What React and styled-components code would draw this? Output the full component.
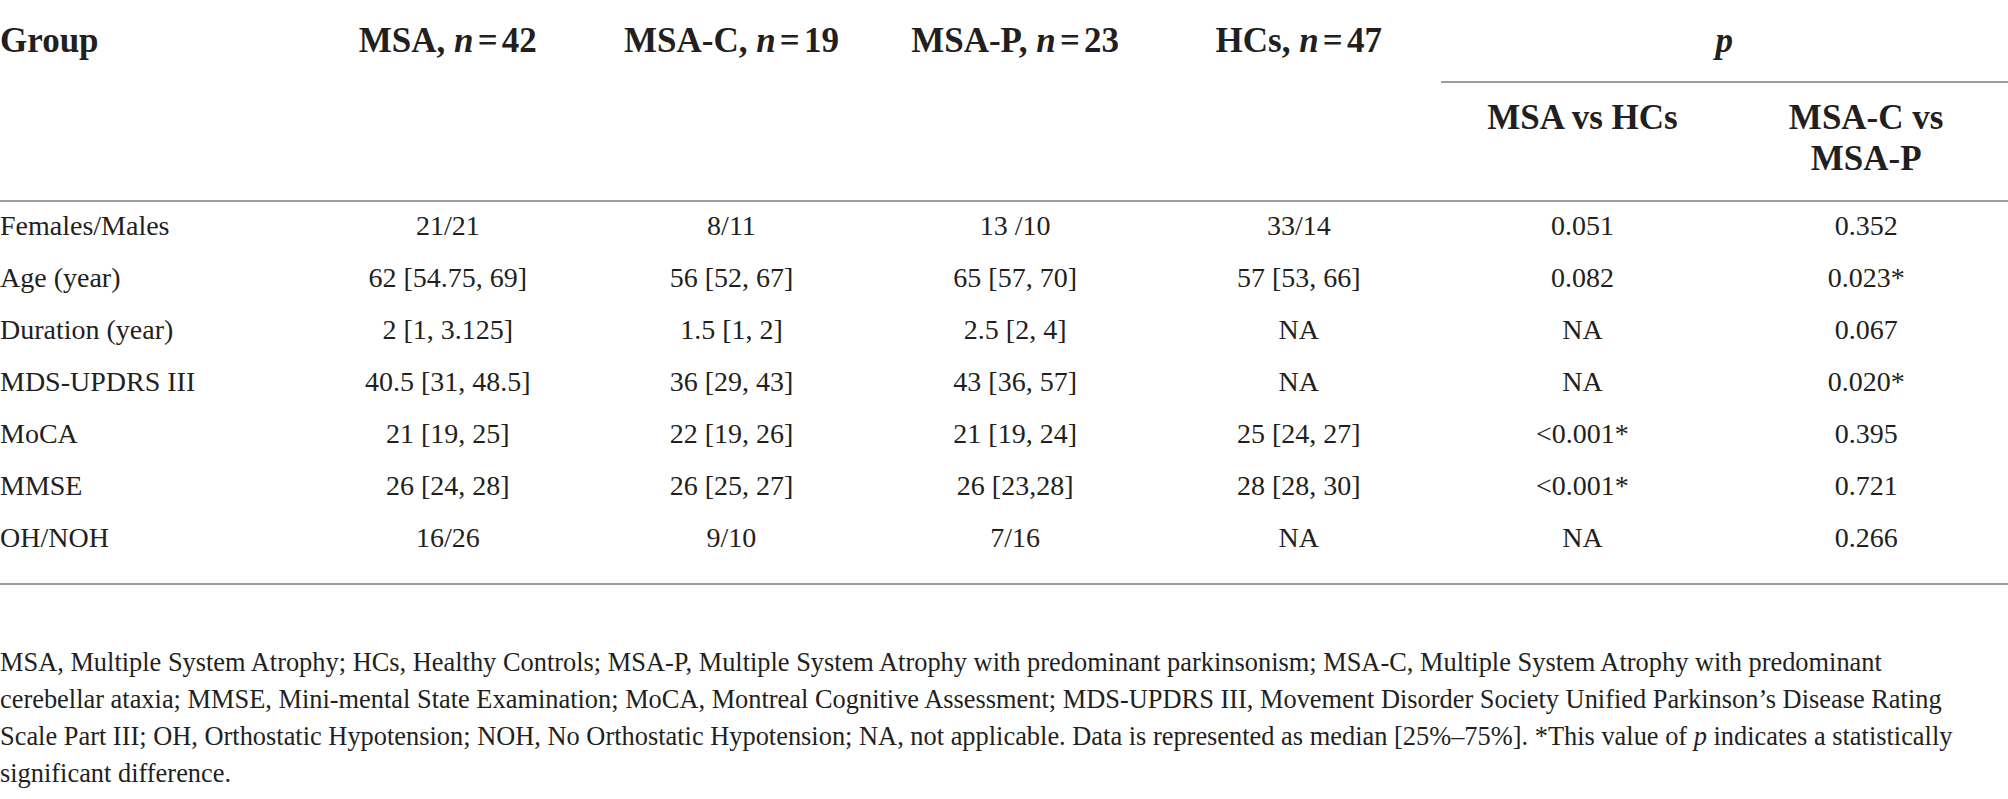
import React from "react";
import styled, { createGlobalStyle } from "styled-components";

const GlobalStyle = createGlobalStyle`
  html, body {
    margin: 0;
    padding: 0;
    background: #ffffff;
  }
  body {
    font-family: "Liberation Serif", "Times New Roman", serif;
    color: #231f20;
  }
`;

const RULE = "#9d9d9d";

const Page = styled.div`
  width: 2008px;
`;

const TableWrap = styled.div`
  padding-bottom: 17px;
  border-bottom: 2px solid ${RULE};
`;

const Table = styled.table`
  width: 100%;
  border-collapse: separate;
  border-spacing: 0;
  table-layout: fixed;
`;

const HeadCell = styled.th`
  font-size: 35px;
  font-weight: bold;
  line-height: 41px;
  vertical-align: top;
  white-space: nowrap;
  text-align: ${(p) => (p.$align === "left" ? "left" : "center")};
  padding: ${(p) => (p.$sub ? "14px 0 21px" : "20px 0 20px")};
  border-bottom: ${(p) => (p.$rule ? `2px solid ${RULE}` : "none")};
`;

const Var = styled.i`
  font-style: italic;
`;

const Eq = styled.span`
  padding: 0 0.12em;
`;

const BodyCell = styled.td`
  font-size: 28px;
  line-height: 32px;
  padding: 7.6px 0 12.4px;
  white-space: nowrap;
  text-align: ${(p) => (p.$align === "left" ? "left" : "center")};
`;

const Footnote = styled.div`
  padding-top: 59.5px;
  font-size: 26.4px;
  line-height: 37px;
`;

const FootLine = styled.div`
  white-space: nowrap;
`;

const groups = [
  ["MSA", "42"],
  ["MSA-C", "19"],
  ["MSA-P", "23"],
  ["HCs", "47"],
];

const rows = [
  ["Females/Males", "21/21", "8/11", "13 /10", "33/14", "0.051", "0.352"],
  ["Age (year)", "62 [54.75, 69]", "56 [52, 67]", "65 [57, 70]", "57 [53, 66]", "0.082", "0.023*"],
  ["Duration (year)", "2 [1, 3.125]", "1.5 [1, 2]", "2.5 [2, 4]", "NA", "NA", "0.067"],
  ["MDS-UPDRS III", "40.5 [31, 48.5]", "36 [29, 43]", "43 [36, 57]", "NA", "NA", "0.020*"],
  ["MoCA", "21 [19, 25]", "22 [19, 26]", "21 [19, 24]", "25 [24, 27]", "<0.001*", "0.395"],
  ["MMSE", "26 [24, 28]", "26 [25, 27]", "26 [23,28]", "28 [28, 30]", "<0.001*", "0.721"],
  ["OH/NOH", "16/26", "9/10", "7/16", "NA", "NA", "0.266"],
];

export default function App() {
  return (
    <Page>
      <GlobalStyle />
      <TableWrap>
        <Table>
          <colgroup>
            <col style={{ width: "306px" }} />
            <col />
            <col />
            <col />
            <col />
            <col />
            <col />
          </colgroup>
          <thead>
            <tr>
              <HeadCell rowSpan={2} $align="left" $rule>
                Group
              </HeadCell>
              {groups.map(([name, n]) => (
                <HeadCell key={name} rowSpan={2} $rule>
                  {name}, <Var>n</Var>
                  <Eq>=</Eq>
                  {n}
                </HeadCell>
              ))}
              <HeadCell colSpan={2} $rule>
                <Var>p</Var>
              </HeadCell>
            </tr>
            <tr>
              <HeadCell $sub $rule>
                MSA vs HCs
              </HeadCell>
              <HeadCell $sub $rule>
                MSA-C vs
                <br />
                MSA-P
              </HeadCell>
            </tr>
          </thead>
          <tbody>
            {rows.map((r) => (
              <tr key={r[0]}>
                {r.map((v, i) => (
                  <BodyCell key={i} $align={i === 0 ? "left" : "center"}>
                    {v}
                  </BodyCell>
                ))}
              </tr>
            ))}
          </tbody>
        </Table>
      </TableWrap>
      <Footnote>
        <FootLine>
          MSA, Multiple System Atrophy; HCs, Healthy Controls; MSA-P, Multiple System Atrophy with
          predominant parkinsonism; MSA-C, Multiple System Atrophy with predominant
        </FootLine>
        <FootLine>
          cerebellar ataxia; MMSE, Mini-mental State Examination; MoCA, Montreal Cognitive
          Assessment; MDS-UPDRS III, Movement Disorder Society Unified Parkinson’s Disease Rating
        </FootLine>
        <FootLine>
          Scale Part III; OH, Orthostatic Hypotension; NOH, No Orthostatic Hypotension; NA, not
          applicable. Data is represented as median [25%–75%]. *This value of <Var>p</Var> indicates
          a statistically
        </FootLine>
        <FootLine>significant difference.</FootLine>
      </Footnote>
    </Page>
  );
}
